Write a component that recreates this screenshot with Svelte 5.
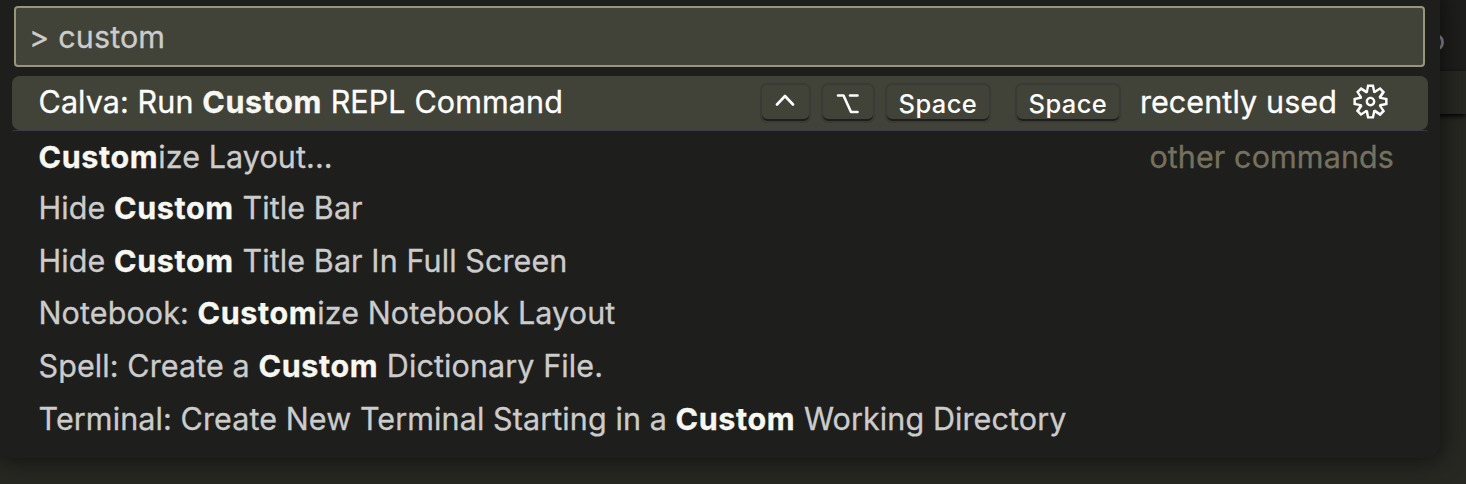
<script>
  const commands = [
    { before: 'Hide ', match: 'Custom', after: ' Title Bar' },
    { before: 'Hide ', match: 'Custom', after: ' Title Bar In Full Screen' },
    { before: 'Notebook: ', match: 'Custom', after: 'ize Notebook Layout' },
    { before: 'Spell: Create a ', match: 'Custom', after: ' Dictionary File.' },
    { before: 'Terminal: Create New Terminal Starting in a ', match: 'Custom', after: ' Working Directory' }
  ];
</script>

<div class="window">
  <div class="tabs"><span class="clipped">o</span></div>
  <div class="crumbs"></div>
  <div class="palette">
    <div class="input"><span class="prompt">&gt;</span><span>custom</span></div>
    <div class="list">
      <div class="row active">
        <span class="label">Calva: Run <b>Custom</b> REPL Command</span>
        <span class="keys">
          <kbd class="ctrl"><svg width="20" height="12" viewBox="0 0 20 12"><path d="M2 10.5L10 2L18 10.5" /></svg></kbd>
          <kbd class="opt"><svg width="24" height="20" viewBox="0 0 24 20"><path d="M2 1.5H7.5L15 18H21.5M14 1.5H21.5" /></svg></kbd>
          <kbd class="space">Space</kbd>
          <kbd class="space chord">Space</kbd>
        </span>
        <span class="recent">recently used</span>
        <svg class="gear" width="39" height="39" viewBox="0 0 16 16"><path fill-rule="evenodd" clip-rule="evenodd" d="M9.1 4.4L8.6 2H7.4l-.5 2.4-.7.3-2-1.3-.9.8 1.3 2-.2.7-2.4.5v1.2l2.4.5.3.8-1.3 2 .8.8 2-1.3.8.3.4 2.3h1.2l.5-2.4.8-.3 2 1.3.8-.8-1.3-2 .3-.8 2.3-.4V7.4l-2.4-.5-.3-.8 1.3-2-.8-.8-2 1.3-.7-.2zM9.4 1l.5 2.4L12 2.1l2 2-1.4 2.1 2.4.4v2.8l-2.4.5L14 12l-2 2-2.1-1.4-.5 2.4H6.6l-.5-2.4L4 13.9l-2-2 1.4-2.1L1 9.4V6.6l2.4-.5L2.1 4l2-2 2.1 1.4.4-2.4h2.8zm.6 7c0 1.1-.9 2-2 2s-2-.9-2-2 .9-2 2-2 2 .9 2 2zM8 9c.6 0 1-.4 1-1s-.4-1-1-1-1 .4-1 1 .4 1 1 1z" /></svg>
      </div>
      <div class="row first-other">
        <span class="label"><b>Custom</b>ize Layout...</span>
        <span class="group">other commands</span>
      </div>
      {#each commands as c}
        <div class="row"><span class="label">{c.before}<b>{c.match}</b>{c.after}</span></div>
      {/each}
    </div>
  </div>
</div>

<style>
  :global(body) { background: #272822; }
  .window {
    position: relative;
    box-sizing: border-box;
    width: 1466px;
    height: 484px;
    overflow: hidden;
    background: #272822;
    font-family: Inter, sans-serif;
    font-size: 30.5px;
    font-weight: 400;
    letter-spacing: 0.1px;
    -webkit-text-stroke: 0.3px currentColor;
    color: #ccc;
  }
  .tabs { height: 71px; background: #1e1f1c; display: flex; justify-content: flex-end; }
  .clipped { margin: 25px 21px 0 0; font-size: 26px; color: #999; }
  .crumbs { height: 43px; box-shadow: 0 2px 5px #000; }
  .palette {
    position: absolute;
    left: -2px;
    top: -12px;
    width: 1442px;
    height: 470px;
    box-sizing: border-box;
    padding: 18px 12px 0 14px;
    background: #1e1f1d;
    border-radius: 14px;
    box-shadow: 0 0 24px 3px rgba(0, 0, 0, 0.55);
  }
  .input {
    box-sizing: border-box;
    width: 1411px;
    height: 61px;
    margin-left: 2px;
    padding: 0 0 1px 13px;
    display: flex;
    align-items: center;
    gap: 9px;
    border: 2px solid #99947c;
    border-radius: 4px;
    background: #414339;
  }
  .list { margin-top: 9px; }
  .row {
    box-sizing: border-box;
    width: 1416px;
    height: 52.7px;
    padding: 0 34px 0 26.5px;
    display: flex;
    align-items: center;
    white-space: pre;
  }
  .label { flex: 1; }
  b { font-weight: 700; letter-spacing: 0.6px; color: #f8f8f2; }
  .active { height: 54px; padding-right: 38px; padding-bottom: 3px; background: #414339; border-radius: 8px; color: #fff; }
  .first-other { height: 51.2px; border-top: 1px solid #3b3a45; border-radius: 3px 3px 0 0; }
  .group { color: #75715e; }
  .keys { display: flex; margin-right: 19px; padding-top: 2px; }
  kbd {
    box-sizing: border-box;
    height: 40px;
    margin-left: 10px;
    display: flex;
    align-items: center;
    justify-content: center;
    border: 2px solid #3a3b34;
    border-radius: 7px;
    box-shadow: inset 0 -2px 0 #1e1f1c;
    font: 500 25.5px Inter, sans-serif;
    letter-spacing: 0.4px;
    -webkit-text-stroke: 0;
  }
  kbd svg { fill: none; stroke: #fff; stroke-width: 2.6; stroke-linecap: round; stroke-linejoin: round; }
  .ctrl { width: 51px; }
  .ctrl svg { margin-top: -5px; }
  .opt { width: 54px; }
  .opt svg { margin-top: 2px; }
  .space { width: 106px; padding-top: 2px; }
  .chord { margin-left: 24px; }
  .recent { margin-right: 14px; }
  .gear { fill: #fff; }
</style>
